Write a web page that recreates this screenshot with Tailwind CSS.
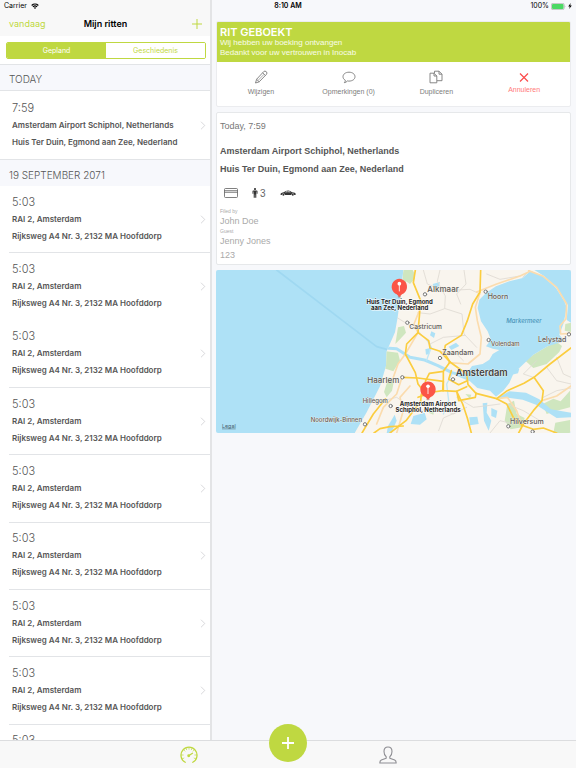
<!DOCTYPE html>
<html lang="nl">
<head>
    <meta charset="UTF-8">
    <meta name="viewport" content="width=device-width, initial-scale=1.0">
    <title>Mijn ritten</title>
    <script src="https://cdn.jsdelivr.net/npm/@tailwindcss/browser@4"></script>
</head>
<body class="h-screen flex flex-col relative overflow-hidden bg-[#f7f8fb] font-['Inter',sans-serif] text-[#555]">

    <!-- shared icons -->
    <svg class="hidden" xmlns="http://www.w3.org/2000/svg">
        <symbol id="chevron" viewBox="0 0 6 10">
            <path d="M0.8 0.8 L5 5 L0.8 9.2" fill="none" stroke="#cfcfd3" stroke-width="0.9"/>
        </symbol>
    </svg>

    <!-- status bar, floats over both panes -->
    <div class="absolute top-0 inset-x-0 z-10 h-3 px-1 grid grid-cols-3 items-center text-[7px] leading-3 text-black">
        <div class="flex items-center gap-1">
            <span>Carrier</span>
            <svg class="w-2 h-[6px]" viewBox="0 0 16 12">
                <path d="M0.5 4.2 A11 11 0 0 1 15.5 4.2 L13.8 6 A8.4 8.4 0 0 0 2.2 6 Z" fill="#000"/>
                <path d="M3 6.9 A7.2 7.2 0 0 1 13 6.9 L11.3 8.6 A4.8 4.8 0 0 0 4.7 8.6 Z" fill="#000"/>
                <path d="M5.6 9.4 A3.6 3.6 0 0 1 10.4 9.4 L8 11.8 Z" fill="#000"/>
            </svg>
        </div>
        <span class="text-center font-semibold">8:10 AM</span>
        <div class="flex items-center justify-end gap-[2px]">
            <span>100%</span>
            <svg class="w-[15px] h-[7px]" viewBox="0 0 30 14">
                <rect x="0.7" y="0.7" width="25.6" height="12.6" rx="3" fill="none" stroke="#9a9a9a" stroke-width="1.2"/>
                <rect x="2" y="2" width="23" height="10" rx="2" fill="#4cd964"/>
                <path d="M27.6 4.6 Q29.6 7 27.6 9.4 Z" fill="#9a9a9a"/>
            </svg>
            <svg class="w-1 h-[6px]" viewBox="0 0 8 12">
                <path d="M5.4 0 L0.4 7 H3.6 L2.4 12 L7.6 5 H4.4 Z" fill="#000"/>
            </svg>
        </div>
    </div>

    <div class="flex flex-1 min-h-0">
        <!-- list of rides -->
        <aside class="w-[212px] shrink-0 flex flex-col min-h-0 overflow-hidden bg-white border-r-2 border-[#e3e4e6]">
            <header class="h-9 shrink-0 pt-3 pl-[9px] pr-2 grid grid-cols-3 items-center bg-[#f8f8f8]">
                <button class="text-left text-[9px] leading-4 text-[#bfd841]">vandaag</button>
                <h1 class="text-center text-[9px] leading-4 font-semibold text-black whitespace-nowrap">Mijn ritten</h1>
                <button class="justify-self-end" aria-label="Nieuwe rit">
                    <svg class="size-[10px]" viewBox="0 0 10 10">
                        <path d="M5 0 V10 M0 5 H10" stroke="#bfd841" stroke-width="1"/>
                    </svg>
                </button>
            </header>

            <div class="h-7 shrink-0 pl-[6px] pr-1 flex items-center">
                <div class="flex-1 grid grid-cols-2 h-[17px] rounded-xs border border-[#bfd841] overflow-hidden text-[7px] leading-[15px]">
                    <button class="bg-[#bfd841] text-white">Gepland</button>
                    <button class="bg-white text-[#bfd841]">Geschiedenis</button>
                </div>
            </div>

            <h2 class="h-[27px] shrink-0 px-[9px] pt-1 flex items-center bg-[#f7f8fc] border-y border-[#e2e4e7] text-[10px] font-light">TODAY</h2>
            <a href="#" class="h-[68px] shrink-0 pl-3 pr-1 flex items-center justify-between">
                <div class="leading-[17px] text-[8px] font-semibold">
                    <p class="text-[11px] font-light">7:59</p>
                    <p>Amsterdam Airport Schiphol, Netherlands</p>
                    <p>Huis Ter Duin, Egmond aan Zee, Nederland</p>
                </div>
                <svg class="w-[6px] h-[9px]"><use href="#chevron"/></svg>
            </a>

            <h2 class="h-[27px] shrink-0 px-[9px] pt-1 flex items-center bg-[#f7f8fc] border-t border-[#e2e4e7] text-[10px] font-light">19 SEPTEMBER 2071</h2>
            <ul class="h-[606px] shrink-0 pl-[9px] grid grid-rows-9">
                <li class="border-b border-[#e2e4e7]">
                    <a href="#" class="h-full pl-[3px] pr-1 flex items-center justify-between">
                        <div class="leading-[17px] text-[8px] font-semibold">
                            <p class="text-[11px] font-light">5:03</p>
                            <p>RAI 2, Amsterdam</p>
                            <p>Rijksweg A4 Nr. 3, 2132 MA Hoofddorp</p>
                        </div>
                        <svg class="w-[6px] h-[9px]"><use href="#chevron"/></svg>
                    </a>
                </li>
                <li>
                    <a href="#" class="h-full pl-[3px] pr-1 flex items-center justify-between">
                        <div class="leading-[17px] text-[8px] font-semibold">
                            <p class="text-[11px] font-light">5:03</p>
                            <p>RAI 2, Amsterdam</p>
                            <p>Rijksweg A4 Nr. 3, 2132 MA Hoofddorp</p>
                        </div>
                        <svg class="w-[6px] h-[9px]"><use href="#chevron"/></svg>
                    </a>
                </li>
                <li class="border-b border-[#e2e4e7]">
                    <a href="#" class="h-full pl-[3px] pr-1 flex items-center justify-between">
                        <div class="leading-[17px] text-[8px] font-semibold">
                            <p class="text-[11px] font-light">5:03</p>
                            <p>RAI 2, Amsterdam</p>
                            <p>Rijksweg A4 Nr. 3, 2132 MA Hoofddorp</p>
                        </div>
                        <svg class="w-[6px] h-[9px]"><use href="#chevron"/></svg>
                    </a>
                </li>
                <li class="border-b border-[#e2e4e7]">
                    <a href="#" class="h-full pl-[3px] pr-1 flex items-center justify-between">
                        <div class="leading-[17px] text-[8px] font-semibold">
                            <p class="text-[11px] font-light">5:03</p>
                            <p>RAI 2, Amsterdam</p>
                            <p>Rijksweg A4 Nr. 3, 2132 MA Hoofddorp</p>
                        </div>
                        <svg class="w-[6px] h-[9px]"><use href="#chevron"/></svg>
                    </a>
                </li>
                <li class="border-b border-[#e2e4e7]">
                    <a href="#" class="h-full pl-[3px] pr-1 flex items-center justify-between">
                        <div class="leading-[17px] text-[8px] font-semibold">
                            <p class="text-[11px] font-light">5:03</p>
                            <p>RAI 2, Amsterdam</p>
                            <p>Rijksweg A4 Nr. 3, 2132 MA Hoofddorp</p>
                        </div>
                        <svg class="w-[6px] h-[9px]"><use href="#chevron"/></svg>
                    </a>
                </li>
                <li class="border-b border-[#e2e4e7]">
                    <a href="#" class="h-full pl-[3px] pr-1 flex items-center justify-between">
                        <div class="leading-[17px] text-[8px] font-semibold">
                            <p class="text-[11px] font-light">5:03</p>
                            <p>RAI 2, Amsterdam</p>
                            <p>Rijksweg A4 Nr. 3, 2132 MA Hoofddorp</p>
                        </div>
                        <svg class="w-[6px] h-[9px]"><use href="#chevron"/></svg>
                    </a>
                </li>
                <li class="border-b border-[#e2e4e7]">
                    <a href="#" class="h-full pl-[3px] pr-1 flex items-center justify-between">
                        <div class="leading-[17px] text-[8px] font-semibold">
                            <p class="text-[11px] font-light">5:03</p>
                            <p>RAI 2, Amsterdam</p>
                            <p>Rijksweg A4 Nr. 3, 2132 MA Hoofddorp</p>
                        </div>
                        <svg class="w-[6px] h-[9px]"><use href="#chevron"/></svg>
                    </a>
                </li>
                <li class="border-b border-[#e2e4e7]">
                    <a href="#" class="h-full pl-[3px] pr-1 flex items-center justify-between">
                        <div class="leading-[17px] text-[8px] font-semibold">
                            <p class="text-[11px] font-light">5:03</p>
                            <p>RAI 2, Amsterdam</p>
                            <p>Rijksweg A4 Nr. 3, 2132 MA Hoofddorp</p>
                        </div>
                        <svg class="w-[6px] h-[9px]"><use href="#chevron"/></svg>
                    </a>
                </li>
                <li class="border-b border-[#e2e4e7]">
                    <a href="#" class="h-full pl-[3px] pr-1 flex items-center justify-between">
                        <div class="leading-[17px] text-[8px] font-semibold">
                            <p class="text-[11px] font-light">5:03</p>
                            <p>RAI 2, Amsterdam</p>
                            <p>Rijksweg A4 Nr. 3, 2132 MA Hoofddorp</p>
                        </div>
                        <svg class="w-[6px] h-[9px]"><use href="#chevron"/></svg>
                    </a>
                </li>
            </ul>
        </aside>

        <!-- ride detail -->
        <main class="flex-1 min-w-0 pt-[21px] pl-1 pr-[5px] flex flex-col gap-[5px] font-['Liberation_Sans',sans-serif]">
            <section class="shrink-0 rounded-xs bg-white border border-[#ebecef] overflow-hidden">
                <div class="h-10 px-[3px] flex flex-col justify-center bg-[#bfd841] text-white/90 text-[8px] leading-[10px]">
                    <h2 class="text-[11px] leading-3 font-semibold text-white font-['Inter',sans-serif]">RIT GEBOEKT</h2>
                    <p>Wij hebben uw boeking ontvangen</p>
                    <p>Bedankt voor uw vertrouwen in Inocab</p>
                </div>
                <div class="h-11 pt-2 pr-[2px] grid grid-cols-4 items-start text-[7px] leading-3 text-[#7d7d7d]">
                    <button class="flex flex-col items-center gap-[2px]">
                        <svg class="size-[14px]" viewBox="0 0 28 28" fill="none" stroke="#7a7a7a" stroke-width="1.8" stroke-linejoin="round">
                            <path d="M3 26 L5.2 18.6 L19.4 3.2 Q21.8 1 24.6 3.4 Q27.2 6 25 8.6 L10.4 23.6 Z"/>
                            <path d="M17.4 5.6 L22.6 11 M5.2 18.6 L10.4 23.6"/>
                            <path d="M8.4 20.6 L20 8.6" stroke-width="1.2"/>
                        </svg>
                        <span>Wijzigen</span>
                    </button>
                    <button class="flex flex-col items-center gap-[2px]">
                        <svg class="size-[14px]" viewBox="0 0 28 28" fill="none" stroke="#7a7a7a" stroke-width="1.8" stroke-linejoin="round">
                            <path d="M14 4.4 C21 4.4 26 8.4 26 13.4 C26 18.4 21 22.2 14 22.2 Q12.4 22.2 10.8 21.9 Q8.6 24.8 4.6 25.4 Q6.8 23 6.6 20.4 C3.6 18.8 2 16.4 2 13.4 C2 8.4 7 4.4 14 4.4 Z"/>
                        </svg>
                        <span>Opmerkingen (0)</span>
                    </button>
                    <button class="flex flex-col items-center gap-[2px]">
                        <svg class="size-[14px]" viewBox="0 0 28 28" fill="none" stroke="#7a7a7a" stroke-width="1.8" stroke-linejoin="round">
                            <path d="M2 6.4 H10 L15.6 12 V25.6 H2 Z M10 6.4 V12 H15.6"/>
                            <path d="M11 6.2 V2.4 H20 L26 8.4 V21.4 H16 M20 2.4 V8.4 H26"/>
                        </svg>
                        <span>Dupliceren</span>
                    </button>
                    <button class="flex flex-col items-center text-[#ff7a7a]">
                        <svg class="size-[14px]" viewBox="0 0 28 28">
                            <path d="M6 7 L22 23 M22 7 L6 23" fill="none" stroke="#fb4b4b" stroke-width="2.4"/>
                        </svg>
                        <span>Annuleren</span>
                    </button>
                </div>
            </section>

            <section class="h-[153px] shrink-0 px-[3px] pt-1 rounded-xs bg-white border border-[#e6e8ea]">
                <p class="text-[9px] leading-[18px] text-[#777]">Today, 7:59</p>
                <div class="pt-[7px] text-[9px] leading-[18px] font-bold text-[#555]">
                    <p>Amsterdam Airport Schiphol, Netherlands</p>
                    <p>Huis Ter Duin, Egmond aan Zee, Nederland</p>
                </div>
                <div class="h-[30px] pl-1 flex items-center gap-[14px]">
                    <svg class="w-[14px] h-[10px]" viewBox="0 0 28 20" fill="none" stroke="#555" stroke-width="1.5">
                        <rect x="1" y="1" width="26" height="18" rx="2"/>
                        <path d="M1 5.4 H27 M1 8.6 H27"/>
                    </svg>
                    <div class="flex items-center gap-[2px] text-[10px] text-[#666]">
                        <svg class="w-[6px] h-[10px]" viewBox="0 0 12 20" fill="#333">
                            <circle cx="6" cy="2.2" r="2.1"/>
                            <path d="M2.6 4.8 H9.4 Q11 4.8 11 6.4 V11.6 H9.4 V7.2 H8.6 V19.6 H6.4 V13 H5.6 V19.6 H3.4 V7.2 H2.6 V11.6 H1 V6.4 Q1 4.8 2.6 4.8 Z"/>
                        </svg>
                        <span>3</span>
                    </div>
                    <svg class="w-4 h-[6px]" viewBox="0 0 32 12" fill="#333">
                        <path d="M0.8 9.4 Q0.4 5.4 5.4 4.8 L7.4 4.4 Q11 1.2 16.4 1.2 Q20.4 1.2 24 4.6 Q31 5 31.4 8 L31 9.8 H28.4 A2.8 2.8 0 0 0 22.8 9.8 H9.6 A2.8 2.8 0 0 0 4 9.8 Z"/>
                        <circle cx="6.8" cy="9.6" r="2"/>
                        <circle cx="25.6" cy="9.6" r="2"/>
                        <path d="M9.4 4.6 Q12 2.4 15.2 2.4 V4.6 Z M16.4 2.4 Q19.4 2.4 21.8 4.6 H16.4 Z" fill="#fff"/>
                    </svg>
                </div>
                <dl class="text-[9px] leading-[14px] text-[#aaa]">
                    <dt class="text-[5px] leading-[6px]">Filed by</dt>
                    <dd>John Doe</dd>
                    <dt class="text-[5px] leading-[6px]">Guest</dt>
                    <dd>Jenny Jones</dd>
                    <dd>123</dd>
                </dl>
            </section>

            <section class="shrink-0 rounded-xs overflow-hidden" aria-label="Kaart">
                <svg class="block w-full h-auto" viewBox="18 18 1065 489" stroke-linecap="round" stroke-linejoin="round">
                    <defs>
                        <clipPath id="land-clip">
                            <path d="M580 18 L570 107 L563 160 L555 205 L536 248 L530 262 L528 306 L510 367 L470 445 L434 507 H1083 V18 Z"/>
                        </clipPath>
                        <g id="pin">
                            <ellipse cx="0" cy="28" rx="5" ry="3" fill="#8a4a3a" opacity="0.4"/>
                            <path d="M0 29 L-8 21 A23 24 0 1 1 8 21 Z" fill="#fb5547"/>
                            <circle cx="0" cy="-11" r="5.5" fill="#fff"/>
                            <path d="M0 -8 V11" stroke="#fff" stroke-width="2.5"/>
                        </g>
                    </defs>

                    <!-- sea -->
                    <rect x="18" y="18" width="1065" height="489" fill="#aee1f6"/>
                    <path d="M200 18 L500 248 L530 256" fill="none" stroke="#9fd8f1" stroke-width="5"/>

                    <g clip-path="url(#land-clip)">
                        <rect x="400" y="0" width="700" height="520" fill="#f9f5ee"/>

                        <g transform="translate(540 0)">
                            <!-- parks and dunes -->
                            <g fill="#cfe6bf">
                                <path d="M40 18 L68 18 L74 30 L74 44 L60 60 L48 52 L50 76 L36 70 Z"/>
                                <path d="M24 190 L42 186 L48 206 L30 226 L16 240 Z"/>
                                <path d="M-12 262 L24 266 L30 290 L10 322 L-20 312 Z"/>
                                <path d="M-4 340 L12 350 L6 380 L-10 400 L-18 384 Z"/>
                                <path d="M406 290 L430 272 L473 247 L500 234 L516 246 L508 264 L470 300 L430 312 Z"/>
                                <path d="M526 180 L543 176 V204 L524 200 Z"/>
                                <path d="M458 420 L490 404 L512 412 L540 380 V430 L500 440 L470 450 Z"/>
                                <path d="M352 420 L372 410 L380 450 L404 462 L396 490 L362 496 L344 470 Z"/>
                                <path d="M496 476 L540 468 V507 H490 Z"/>
                                <path d="M120 430 L134 436 L130 452 L116 446 Z"/>
                                <path d="M226 390 L244 392 L240 404 Z"/>
                            </g>

                            <!-- lakes and inland water -->
                            <g fill="#aee1f6">
                                <path d="M422 20 L398 42 L358 52 L318 67 L288 87 L268 107 L263 132 L273 172 L293 202 L303 227 L288 247 L308 254 L328 258 L308 270 L298 287 L278 300 L246 306 L232 326 L200 336 L240 352 L262 372 L300 380 L318 398 L340 380 L358 357 L370 330 L388 312 L430 272 L473 247 L523 232 L508 212 L520 180 L524 162 L530 130 L523 112 L498 72 L458 37 Z"/>
                                <path d="M430 16 H543 V176 L530 168 L534 124 L500 70 L462 36 Z"/>
                                <path d="M322 402 L358 382 L408 386 L448 406 L483 436 L543 446 V460 L500 462 L466 440 L438 422 L398 407 L360 402 Z"/>
                                <path d="M238 460 L262 458 L266 480 L240 484 Z"/>
                                <path d="M278 418 L292 416 L290 446 L304 470 L296 500 L282 470 Z"/>
                                <path d="M304 432 L322 440 L318 462 L304 456 Z"/>
                                <path d="M70 456 L104 446 L110 466 L90 482 L62 480 Z"/>
                                <path d="M362 320 L388 314 L384 328 L366 332 Z"/>
                                <path d="M128 60 L150 54 L146 68 L132 72 Z"/>
                                <path d="M124 202 L136 208 L132 222 L120 214 Z"/>
                                <path d="M176 248 L198 236 L208 246 L184 258 Z"/>
                                <path d="M106 256 L120 252 L118 270 L108 272 Z"/>
                                <path d="M-6 486 L14 452 L20 470 L4 507 H-10 Z"/>
                            </g>
                            <path d="M-14 252 L20 254 L60 280 L104 288 L142 304 L186 326 L236 340" fill="none" stroke="#aee1f6" stroke-width="9"/>
                            <path d="M186 330 L170 360 L176 410 L160 450 M110 288 L124 250 L110 226" fill="none" stroke="#bfe6f5" stroke-width="4"/>

                            <!-- minor roads -->
                            <g fill="none" stroke="#dedad3" stroke-width="2.5">
                                <path d="M100 18 L112 60 L160 80 L240 76 L270 90"/>
                                <path d="M150 18 L142 52 L166 96 L164 134 L120 150 L84 146"/>
                                <path d="M166 134 L216 150 L222 210 L260 250"/>
                                <path d="M222 18 L228 60 L200 90 L212 120"/>
                                <path d="M120 240 L160 220 L226 214 M20 160 L84 200 L120 240"/>
                                <path d="M330 420 L300 424 L250 430 L200 400 M350 420 L400 440 L450 470"/>
                                <path d="M50 420 L90 440 L140 430 L190 450 L230 430"/>
                                <path d="M146 500 L160 462 L210 440 M300 507 L330 470 L370 480"/>
                                <path d="M470 310 L500 350 L543 360 M430 340 L400 330 L440 290"/>
                                <path d="M500 280 L520 330 L543 340 M460 400 L500 380 L543 372"/>
                                <path d="M220 290 L200 270 L150 262 M-20 410 L20 400 L50 420"/>
                                <path d="M290 30 L330 46 L390 36 M420 18 L398 40"/>
                            </g>

                            <!-- secondary roads -->
                            <g fill="none" stroke="#fbdcae" stroke-width="5">
                                <path d="M270 86 L256 130 L262 170 L274 220 L270 270 L234 300 L176 296"/>
                                <path d="M260 84 L320 60 L390 36 L416 24"/>
                                <path d="M10 340 L24 300 L46 270 L84 206 L72 180 L100 110"/>
                                <path d="M36 340 L20 390 L-20 430 L-40 480"/>
                                <path d="M416 20 L460 37 L500 70 L530 120 L528 164 L510 186 L512 210 L543 208"/>
                                <path d="M60 366 L30 400 L40 440 L20 507"/>
                                <path d="M396 484 L380 440 L352 400 L324 404"/>
                                <path d="M456 410 L500 396 L543 366"/>
                            </g>

                            <!-- motorways -->
                            <g fill="none" stroke="#fbcd3f" stroke-width="5">
                                <path d="M76 18 L70 56 L92 110 L84 206 L116 230 L120 252 L150 262 L180 294"/>
                                <path d="M272 18 L270 84 L248 120 L232 170 L214 214 L166 244 L162 266 L180 294"/>
                                <path d="M84 206 L50 240 L46 270 L76 326 L84 360 L112 396"/>
                                <path d="M180 294 L160 322 L118 328 L106 352 M180 294 L230 330 L234 362 L258 388"/>
                                <path d="M36 340 L84 342 L160 352 L158 380 L200 382 L230 368"/>
                                <path d="M84 400 L130 384 L158 380 M160 322 L160 380"/>
                                <path d="M200 382 L218 420 L232 462 L244 507 M200 382 L206 410 L256 400 L258 388"/>
                                <path d="M258 388 L320 404 L352 380 L402 358 L432 340 L480 300 L543 252"/>
                                <path d="M432 340 L460 380 L456 410 L430 440 L400 480 L386 507"/>
                                <path d="M320 404 L350 420 L370 460 L396 484 L430 496 L460 492 L500 507"/>
                                <path d="M94 390 L92 412 L48 470 L0 507 M-14 405 L-50 450 L-84 507"/>
                                <path d="M-48 507 L-30 494 L0 488 L40 486"/>
                                <path d="M184 320 L176 346 L206 362 L232 350"/>
                            </g>
                        </g>
                    </g>

                    <!-- towns -->
                    <g fill="#fff" stroke="#777" stroke-width="3">
                        <circle cx="645" cy="91" r="5"/>
                        <circle cx="827" cy="83" r="5"/>
                        <circle cx="592" cy="176" r="5"/>
                        <circle cx="836" cy="228" r="5"/>
                        <circle cx="690" cy="282" r="5"/>
                        <circle cx="577" cy="340" r="5"/>
                        <circle cx="729" cy="346" r="5"/>
                        <circle cx="1077" cy="211" r="5"/>
                        <circle cx="542" cy="426" r="5"/>
                        <circle cx="465" cy="481" r="5"/>
                        <circle cx="895" cy="487" r="5"/>
                        <circle cx="968" cy="503" r="5"/>
                    </g>

                    <use href="#pin" x="568" y="70"/>
                    <use href="#pin" x="654" y="378"/>

                    <g class="font-['Inter',sans-serif] font-medium" fill="#5c5a57" stroke="#f9f5ee" stroke-width="2" paint-order="stroke">
                        <text x="652" y="83" font-size="24">Alkmaar</text>
                        <text x="833" y="104" font-size="21">Hoorn</text>
                        <text x="598" y="196" font-size="20">Castricum</text>
                        <text x="843" y="245" font-size="18">Volendam</text>
                        <text x="697" y="273" font-size="21">Zaandam</text>
                        <text x="984" y="233" font-size="21">Lelystad</text>
                        <text x="472" y="358" font-size="24">Haarlem</text>
                        <text x="737" y="337" font-size="28" class="font-semibold" fill="#444">Amsterdam</text>
                        <text x="458" y="418" font-size="18">Hillegom</text>
                        <text x="302" y="474" font-size="18">Noordwijk-Binnen</text>
                        <text x="900" y="479" font-size="21">Hilversum</text>
                    </g>
                    <text x="942" y="177" font-size="18" fill="#4793b8" text-anchor="middle" class="font-['Inter',sans-serif] italic font-medium">Markermeer</text>
                    <g class="font-['Inter',sans-serif] font-bold" font-size="18" fill="#262626" stroke="#fff" stroke-width="4" stroke-opacity="0.7" paint-order="stroke" text-anchor="middle">
                        <text x="569" y="120">Huis Ter Duin, Egmond</text>
                        <text x="569" y="138">aan Zee, Nederland</text>
                        <text x="654" y="427">Amsterdam Airport</text>
                        <text x="654" y="445">Schiphol, Netherlands</text>
                    </g>
                    <a href="#"><text x="36" y="491" font-size="16" fill="#44606c" text-decoration="underline" class="font-['Inter',sans-serif]">Legal</text></a>
                </svg>
            </section>
        </main>
    </div>

    <!-- tab bar -->
    <nav class="relative h-7 shrink-0 border-t border-[#dcdddf] bg-[#f8f8f8] flex items-center justify-center gap-[181px]">
        <a href="#" aria-label="Ritten">
            <svg class="w-[18px] h-[18px]" viewBox="0 0 36 36" fill="none" stroke="#bfd841" stroke-width="2.6" stroke-linecap="round">
                <path d="M10.5 32.5 A16 16 0 1 1 25.5 32.5"/>
                <path d="M18 3 V6.4 M7.6 8 L9.8 10.2 M28.4 8 L26.2 10.2 M3 18 H6.4 M33 18 H29.6 M5 25.6 L7.8 24.2 M31 25.6 L28.2 24.2 M12 4.6 L13.2 7.4 M24 4.6 L22.8 7.4" stroke-width="1.4"/>
                <path d="M18 19 L25 14.6" stroke-width="2.6"/>
                <circle cx="17.4" cy="19.4" r="1.6" fill="#bfd841"/>
            </svg>
        </a>
        <button class="absolute -top-[17px] left-1/2 -translate-x-1/2 size-[38px] rounded-full bg-[#bfd841] flex items-center justify-center" aria-label="Rit boeken">
            <svg class="size-3" viewBox="0 0 12 12">
                <path d="M6 0 V12 M0 6 H12" stroke="#fff" stroke-width="1.8"/>
            </svg>
        </button>
        <a href="#" aria-label="Profiel">
            <svg class="w-[18px] h-[18px]" viewBox="0 0 36 36" fill="none" stroke="#8e8e93" stroke-width="2.2" stroke-linejoin="round">
                <path d="M18 2 C23 2 26 5.6 26 11 C26 16 24 19.6 21.6 21.4 V24.4 L31.4 28 Q34.4 29.4 34.4 34 H1.6 Q1.6 29.4 4.6 28 L14.4 24.4 V21.4 C12 19.6 10 16 10 11 C10 5.6 13 2 18 2 Z"/>
            </svg>
        </a>
    </nav>
</body>
</html>
